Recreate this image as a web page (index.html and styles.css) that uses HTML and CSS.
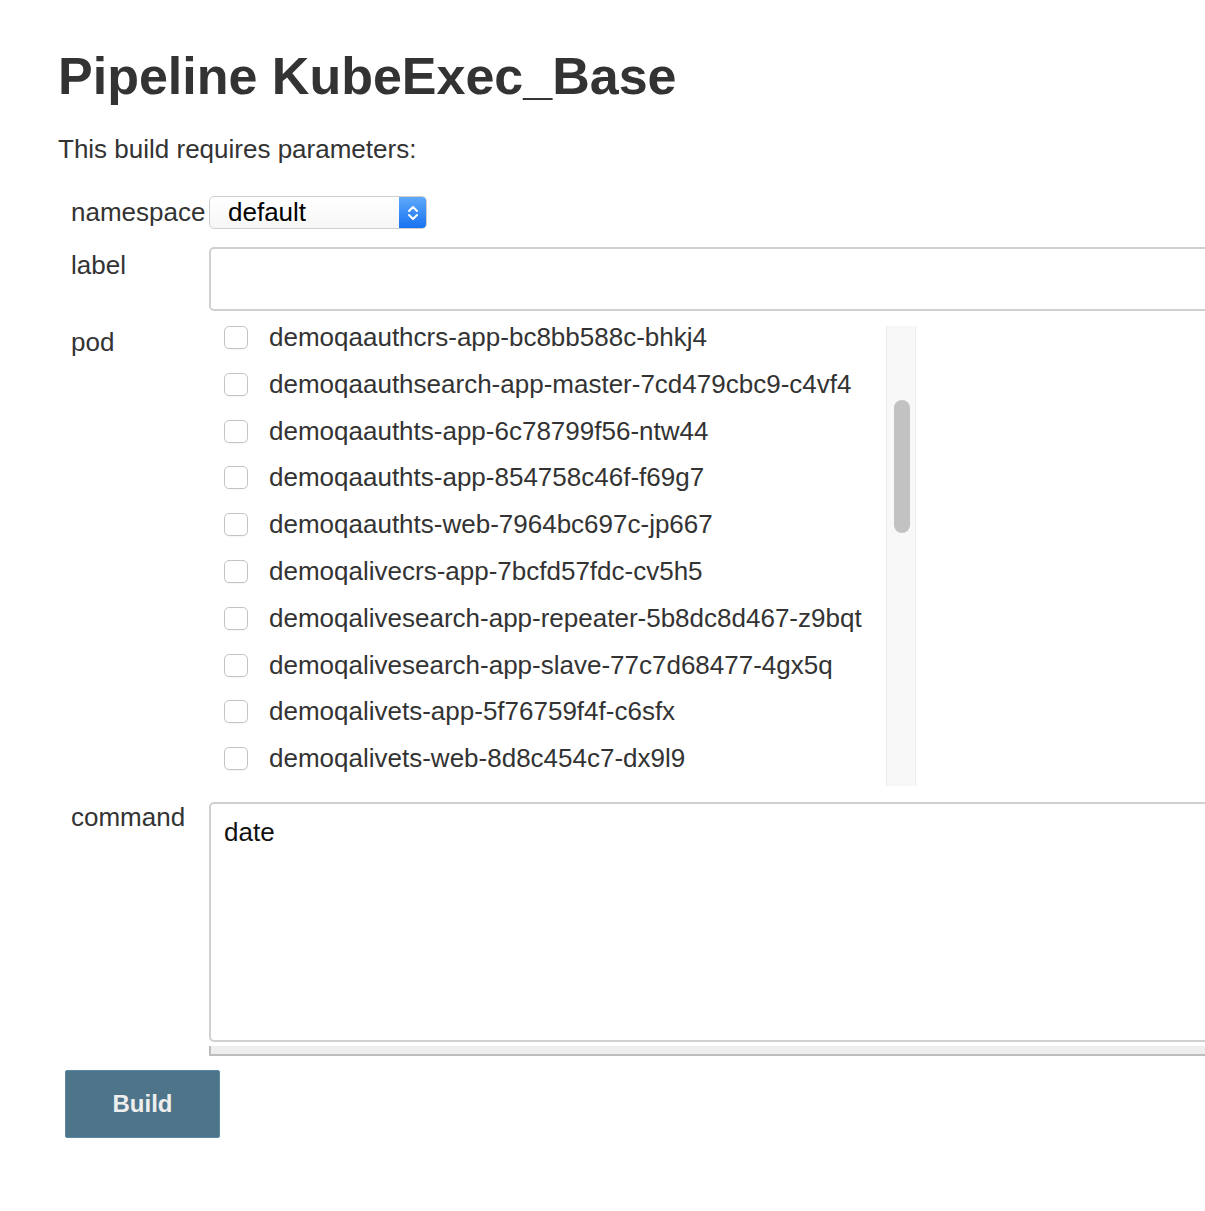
FILE: index.html
```html
<!DOCTYPE html>
<html>
<head>
<meta charset="utf-8">
<title>Pipeline KubeExec_Base</title>
<link rel="stylesheet" href="styles.css">
</head>
<body>
<div class="page">
  <h1 class="title">Pipeline KubeExec_Base</h1>
  <p class="intro">This build requires parameters:</p>
  <form class="params">
    <div class="row row-ns">
      <div class="pname">namespace</div>
      <div class="select">
        <span class="select-value">default</span>
        <span class="select-arrows">
          <svg width="14" height="22" viewBox="0 0 14 22"><path d="M3 9 L7 5 L11 9" fill="none" stroke="#fff" stroke-width="2" stroke-linecap="round" stroke-linejoin="round"/><path d="M3 13 L7 17 L11 13" fill="none" stroke="#fff" stroke-width="2" stroke-linecap="round" stroke-linejoin="round"/></svg>
        </span>
      </div>
    </div>
    <div class="row row-label">
      <div class="pname">label</div>
      <div class="text-input"></div>
    </div>
    <div class="row row-pod">
      <div class="pname">pod</div>
      <div class="pod-box">
        <div class="pod-list">
          <label class="pod-item"><input type="checkbox" class="cb"><span>demoqaauthcrs-app-bc8bb588c-bhkj4</span></label>
          <label class="pod-item"><input type="checkbox" class="cb"><span>demoqaauthsearch-app-master-7cd479cbc9-c4vf4</span></label>
          <label class="pod-item"><input type="checkbox" class="cb"><span>demoqaauthts-app-6c78799f56-ntw44</span></label>
          <label class="pod-item"><input type="checkbox" class="cb"><span>demoqaauthts-app-854758c46f-f69g7</span></label>
          <label class="pod-item"><input type="checkbox" class="cb"><span>demoqaauthts-web-7964bc697c-jp667</span></label>
          <label class="pod-item"><input type="checkbox" class="cb"><span>demoqalivecrs-app-7bcfd57fdc-cv5h5</span></label>
          <label class="pod-item"><input type="checkbox" class="cb"><span>demoqalivesearch-app-repeater-5b8dc8d467-z9bqt</span></label>
          <label class="pod-item"><input type="checkbox" class="cb"><span>demoqalivesearch-app-slave-77c7d68477-4gx5q</span></label>
          <label class="pod-item"><input type="checkbox" class="cb"><span>demoqalivets-app-5f76759f4f-c6sfx</span></label>
          <label class="pod-item"><input type="checkbox" class="cb"><span>demoqalivets-web-8d8c454c7-dx9l9</span></label>
        </div>
        <div class="scroll-track"><div class="scroll-thumb"></div></div>
      </div>
    </div>
    <div class="row row-cmd">
      <div class="pname">command</div>
      <div class="cmd-field">
        <div class="textarea">date</div>
        <div class="handle"></div>
      </div>
    </div>
    <div class="actions">
      <button type="button" class="build-btn">Build</button>
    </div>
  </form>
</div>
</body>
</html>
```
FILE: styles.css
```css
html, body {
  margin: 0;
  padding: 0;
  overflow: hidden;
  background: #fff;
}
body {
  font-family: "Liberation Sans", Arial, Helvetica, sans-serif;
  color: #333;
  font-size: 26px;
}
.page {
  padding: 46px 0 0 58px;
  width: 1600px;
}
.title {
  font-size: 52px;
  font-weight: bold;
  margin: 0;
  line-height: 60px;
  color: #333;
}
.intro {
  margin: 28px 0 0 0;
  line-height: 30px;
}
.params {
  margin-top: 32px;
}
.row {
  display: flex;
  align-items: flex-start;
}
.pname {
  width: 152px;
  padding-left: 13px;
  box-sizing: border-box;
  line-height: 30px;
  padding-top: 3px;
  flex: none;
  white-space: nowrap;
}
.row-ns {
  align-items: center;
}
.row-ns .pname {
  padding-top: 0;
  line-height: 33px;
}
.select {
  width: 218px;
  height: 33px;
  box-sizing: border-box;
  display: flex;
  border: 1px solid #cfcfcf;
  border-radius: 5px;
  background: linear-gradient(#fff, #f6f6f6);
  overflow: hidden;
  margin-left: -1px;
}
.select-value {
  flex: 1;
  line-height: 31px;
  padding-left: 18px;
  color: #000;
}
.select-arrows {
  width: 27px;
  display: flex;
  align-items: center;
  justify-content: center;
  background: linear-gradient(#5ea9fb, #1872f0);
}
.row-label {
  margin-top: 18px;
}
.text-input {
  width: 1300px;
  height: 64px;
  box-sizing: border-box;
  border: 2px solid #d0d0d0;
  border-radius: 5px;
  margin-left: -1px;
}
.row-pod {
  margin-top: 15px;
}
.row-pod .pname {
  padding-top: 1px;
}
.pod-box {
  display: flex;
  margin-left: -1px;
}
.pod-list {
  width: 677px;
  height: 460px;
}
.pod-item {
  display: flex;
  align-items: flex-start;
  height: 46.8px;
  padding-left: 15px;
  color: #333;
}
.pod-item span {
  line-height: 22px;
  white-space: nowrap;
  padding-left: 21px;
}
.cb {
  -webkit-appearance: none;
  appearance: none;
  margin: 0;
  width: 24px;
  height: 23px;
  border: 1px solid #c4c4c4;
  border-radius: 5px;
  background: #fff;
  flex: none;
  box-shadow: 0 1px 1px rgba(0,0,0,0.04);
}
.scroll-track {
  width: 30px;
  height: 460px;
  box-sizing: border-box;
  background: #f8f8f8;
  border-left: 1px solid #ebebeb;
  border-right: 1px solid #eeeeee;
}
.scroll-thumb {
  width: 16px;
  height: 133px;
  margin: 74px 0 0 7px;
  border-radius: 8px;
  background: #c2c2c2;
}
.row-cmd {
  margin-top: 16px;
}
.row-cmd .pname {
  padding-top: 0;
}
.cmd-field {
  margin-left: -1px;
}
.textarea {
  width: 1300px;
  height: 240px;
  box-sizing: border-box;
  border: 2px solid #d0d0d0;
  border-radius: 5px;
  padding: 13px 0 0 13px;
  line-height: 30px;
  color: #111;
}
.handle {
  margin-top: 4px;
  width: 1300px;
  height: 10px;
  box-sizing: border-box;
  background: #eeeeee;
  border-left: 2px solid #bdbdbd;
  border-bottom: 2px solid #bdbdbd;
}
.actions {
  margin-top: 14px;
  padding-left: 7px;
}
.build-btn {
  width: 155px;
  height: 68px;
  background: #4d7489;
  border: 1px solid #5b87a1;
  border-radius: 2px;
  color: #eeeeee;
  font-family: "Liberation Sans", Arial, Helvetica, sans-serif;
  font-weight: bold;
  font-size: 24px;
  padding: 0;
  cursor: pointer;
}
```
